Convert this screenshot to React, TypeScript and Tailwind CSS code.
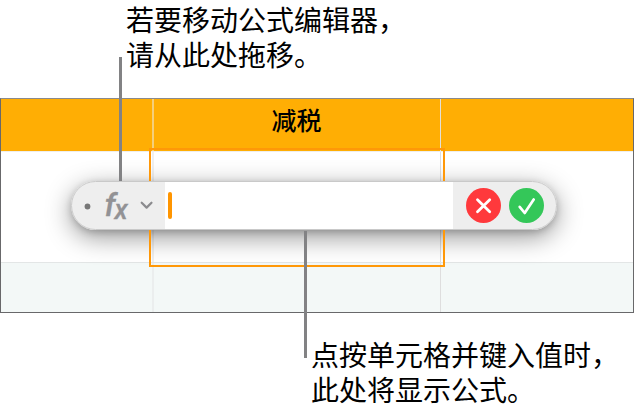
import { ReactNode } from 'react'

function Caption({ children, className }: { children: ReactNode; className: string }) {
  return (
    <p className={`text-[28px] leading-[34.5px] text-black whitespace-nowrap ${className}`}>
      {children}
    </p>
  )
}

function Table() {
  return (
    <div className="w-[634px] h-[215px] flex flex-col border border-[#68686a] border-t-[#8a8a8c] overflow-hidden">
      {/* Header row */}
      <div className="h-[53px] shrink-0 flex bg-[#ffae04] border-b border-[#eeeeee]">
        <div className="w-[153px] border-r-2 border-[#f5cf7c]" />
        <div className="w-[287px] border-r border-[#e2dfd8] pr-px text-center text-[25px] leading-[41px] font-medium text-black">
          减税
        </div>
      </div>
      {/* Body rows */}
      <div className="h-[111px] shrink-0 flex bg-white border-b border-[#e3e6e6]">
        <div className="w-[153px] border-r-2 border-[#f0f0f0]" />
        <div className="w-[287px] border-r border-[#dedede]" />
      </div>
      <div className="grow flex bg-[#f3f8f7]">
        <div className="w-[153px] border-r-2 border-[#ebeeee]" />
        <div className="w-[287px] border-r border-[#dedede]" />
      </div>
    </div>
  )
}

function FormulaEditor() {
  return (
    <div className="absolute left-[71px] top-[181px] w-[486px] h-[49px] flex rounded-full overflow-hidden bg-[#eeeeee] border border-[#c9c9c9]">
      <div className="w-[93px] flex items-center">
        <svg width="93" height="47" viewBox="0 0 93 47" fill="none">
          <circle cx="15.5" cy="24.5" r="2.9" fill="#777777" />
          <g fill="#929295" stroke="#929295" strokeWidth="0.3" fontFamily="Roboto, sans-serif" fontStyle="italic" fontWeight="500">
            <text x="32.5" y="34" fontSize="32">
              f
            </text>
            <text x="42.5" y="37" fontSize="27">
              x
            </text>
          </g>
          <path
            d="M69.7 20.7L74.6 25.6L79.5 20.7"
            stroke="#8b8b8e"
            strokeWidth="2.2"
            strokeLinecap="round"
            strokeLinejoin="round"
          />
        </svg>
      </div>
      <div className="w-[288px] flex items-center bg-white pl-[3px]">
        <span className="w-1 h-[27px] rounded-full bg-[#ff9500] -mt-px" />
      </div>
      <div className="grow flex items-center gap-2 pl-[13px]">
        <svg width="35" height="35" viewBox="0 0 35 35" fill="none">
          <circle cx="17.5" cy="17.5" r="17.5" fill="#ff393c" />
          <path d="M11.5 11.8L23.7 23.8M23.7 11.8L11.5 23.8" stroke="white" strokeWidth="2.8" strokeLinecap="round" />
        </svg>
        <svg width="35" height="35" viewBox="0 0 35 35" fill="none">
          <circle cx="17.5" cy="17.5" r="17.5" fill="#34c759" />
          <path
            d="M10.7 18.9L15.7 25L24.7 11.5"
            stroke="white"
            strokeWidth="2.7"
            strokeLinecap="round"
            strokeLinejoin="round"
          />
        </svg>
      </div>
    </div>
  )
}

export default function App() {
  return (
    <div
      lang="zh-CN"
      className="relative w-[636px] h-[412px] overflow-hidden bg-white font-['Noto_Sans_CJK_SC',sans-serif]"
    >
      <Caption className="h-[98px] pt-[2px] pl-[126px]">
        若要移动公式编辑器，
        <br />
        请从此处拖移。
      </Caption>
      <div className="relative h-[215px]">
        <Table />
        {/* Shadow cast by the editor, kept inside the table body */}
        <div className="absolute left-px top-[54px] w-[632px] h-[160px] overflow-hidden">
          <div className="absolute left-[70px] top-[29px] w-[486px] h-[49px] rounded-full shadow-[0_7px_26px_rgba(0,0,0,0.42),0_2px_7px_rgba(0,0,0,0.18)]" />
        </div>
      </div>
      <Caption className="pt-[24px] pl-[311px]">
        点按单元格并键入值时，
        <br />
        此处将显示公式。
      </Caption>

      {/* Selected cell */}
      <div className="absolute left-[149px] top-[148px] w-[296px] h-[119px] border-2 border-[#ff9808]" />
      {/* Callout lines */}
      <div className="absolute left-[119px] top-[57px] w-[2.5px] h-[125px] bg-[#828284]" />
      <FormulaEditor />
      <div className="absolute left-[304px] top-[231px] w-[3px] h-[127px] bg-[#828284]" />
    </div>
  )
}
